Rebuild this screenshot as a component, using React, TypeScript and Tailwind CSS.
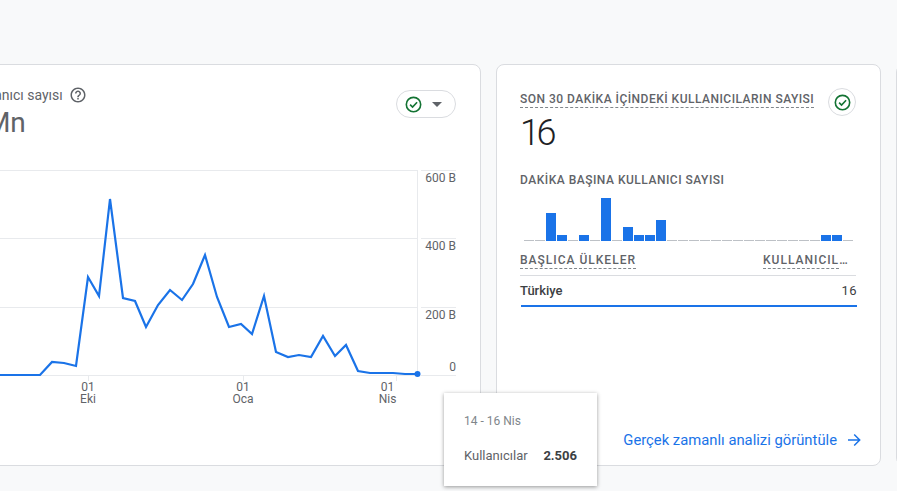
import React from "react";

const pts: [number, number][] = [[0,375],[40,375],[52,362],[64,363],[76,366],[88,277],[99,296],[110,199],[123,298],[135,301],[146,327],[158,305],[170,290],[182,300],[193,284],[205,255],[217,297],[229,327],[241,324],[252,334],[264,296],[276,352],[288,357],[299,355],[311,357],[323,336],[335,356],[346,345],[358,371],[370,373],[393,373],[405,374],[417,374]];
const bars: Record<number, number> = {2:28,3:6,5:6,7:43,9:14,10:6,11:6,12:21,27:6,28:6};

function CheckCircle({ size = 18 }: { size?: number }) {
  return (
    <svg width={size} height={size} viewBox="0 0 18 18" fill="none">
      <circle cx="9" cy="9" r="7.6" stroke="#137333" strokeWidth="1.7" />
      <path d="M5.4 9.2 L8 11.8 L12.8 6.6" stroke="#137333" strokeWidth="1.7" />
    </svg>
  );
}

function Chart() {
  const gridY = [170, 238, 307, 375];
  const labels = ["600 B", "400 B", "200 B", "0"];
  return (
    <svg width="520" height="280" viewBox="-60 165 520 280" className="block -ml-[1px]" style={{ fontFamily: "Roboto, sans-serif" }}>
      {gridY.map((y) => (
        <g key={y}>
          <line x1="-60" x2="417" y1={y + 0.5} y2={y + 0.5} stroke="#e8eaed" />
          <line x1="421" x2="456" y1={y + 0.5} y2={y + 0.5} stroke="#e8eaed" />
        </g>
      ))}
      <line x1="417.5" x2="417.5" y1="170" y2="376" stroke="#e8eaed" />
      {[88, 243, 396].map((x) => (
        <line key={x} x1={x + 0.5} x2={x + 0.5} y1="376" y2="381" stroke="#e8eaed" />
      ))}
      {labels.map((t, i) => (
        <text key={t} x="456" y={t === "0" ? 371 : gridY[i] + 12} textAnchor="end" fontSize="12" fill="#5f6368">{t}</text>
      ))}
      {[["01","Eki",88],["01","Oca",243],["01","Nis",387.5]].map(([a,b,x]) => (
        <g key={String(b)} textAnchor="middle" fontSize="12" fill="#5f6368">
          <text x={Number(x)} y="391">{a}</text>
          <text x={Number(x)} y="403">{b}</text>
        </g>
      ))}
      <polyline points={pts.map((p) => p.join(",")).join(" ")} fill="none" stroke="#1a73e8" strokeWidth="2.2" strokeLinejoin="miter" />
      <circle cx="417.5" cy="374" r="3" fill="#1a73e8" />
    </svg>
  );
}

function RightCard() {
  return (
    <div className="w-[385px] h-[402px] shrink-0 bg-white border border-[#dadce0] rounded-lg flex flex-col pl-[23px] pr-[24px] pt-[26px] pb-[15px]">
      <div className="flex justify-between items-start">
        <div className="text-[12px] leading-[16px] font-medium tracking-[0.48px] text-[#5f6368] border-b border-dashed border-[#80868b] whitespace-nowrap">SON 30 DAKİKA İÇİNDEKİ KULLANICILARIN SAYISI</div>
        <div className="w-[28px] h-[28px] -mt-[3px] rounded-full border border-[#dadce0] flex items-center justify-center"><CheckCircle size={17} /></div>
      </div>
      <div className="text-[36px] leading-[40px] text-[#202124] -mt-[3px] font-light tracking-[-3.5px]">16</div>
      <div className="mt-[19px] text-[12px] leading-[16px] font-medium tracking-[0.5px] text-[#5f6368]">DAKİKA BAŞINA KULLANICI SAYISI</div>
      <div className="mt-[9px] h-[44px] ml-[4px] flex items-end gap-[1px]">
        {Array.from({ length: 30 }).map((_, i) => (
          <div key={i} className={bars[i] ? "w-[10px] bg-[#1a73e8]" : "w-[10px] h-[1px] bg-[#bdc1c6]"} style={bars[i] ? { height: bars[i] } : undefined} />
        ))}
      </div>
      <div className="mt-[11px] flex justify-between items-start text-[12px] leading-[16px] font-medium tracking-[1px] text-[#5f6368] pb-[6px] border-b border-[#dadce0] w-[336px]">
        <span className="border-b border-dashed border-[#80868b]">BAŞLICA ÜLKELER</span>
        <div className="mr-[8px] w-[85px]">
          <div className="whitespace-nowrap overflow-hidden text-ellipsis">KULLANICILAR</div>
          <div className="w-[76px] border-b border-dashed border-[#80868b]" />
        </div>
      </div>
      <div className="flex justify-between text-[13px] leading-[16px] mt-[7px] w-[337px]">
        <span className="font-medium text-[#3c4043]">Türkiye</span>
        <span className="text-[#3c4043] tracking-[0.5px]">16</span>
      </div>
      <div className="mt-[6px] ml-[1px] h-[2px] w-[336px] bg-[#1a73e8]" />
      <div className="mt-auto flex justify-end items-center gap-[10px] -mr-[5px] text-[14.8px] leading-[20px] text-[#1a73e8]">
        <span>Gerçek zamanlı analizi görüntüle</span>
        <svg width="14" height="14" viewBox="0 0 14 14" fill="none" stroke="#1a73e8" strokeWidth="1.5">
          <path d="M1 7 H12.5 M7.2 1.5 L12.7 7 L7.2 12.5" />
        </svg>
      </div>
    </div>
  );
}

export default function App() {
  return (
    <div className="relative w-[897px] h-[491px] overflow-hidden bg-[#f8f9fa]" style={{ fontFamily: "Roboto, sans-serif" }}>
      <div className="flex gap-[15px] pt-[64px] -ml-[60px]">
        <div className="w-[541px] h-[402px] shrink-0 bg-white border border-[#dadce0] rounded-lg flex flex-col">
          <div className="flex justify-between items-start h-[100px] pr-[24px] pt-[21px] pl-[19px]">
            <div>
              <div className="ml-[11px] flex items-center gap-[6px] text-[14px] leading-[14px] text-[#5f6368]">
                <span>Kullanıcı sayısı</span>
                <svg width="18" height="18" viewBox="0 0 24 24" fill="#5f6368"><path d="M11 18h2v-2h-2v2zm1-16C6.48 2 2 6.48 2 12s4.48 10 10 10 10-4.48 10-10S17.52 2 12 2zm0 18c-4.41 0-8-3.59-8-8s3.59-8 8-8 8 3.59 8 8-3.59 8-8 8zm0-14c-2.21 0-4 1.79-4 4h2c0-1.1.9-2 2-2s2 .9 2 2c0 2-3 1.75-3 5h2c0-2.25 3-2.5 3-5 0-2.21-1.79-4-4-4z"/></svg>
              </div>
              <div className="-ml-[18px] text-[28px] leading-[36px] text-[#5f6368] mt-[1px]">2,5 Mn</div>
            </div>
            <div className="mt-[4px] w-[60px] h-[28px] rounded-full border border-[#dadce0] flex items-center pl-[8px] gap-[10px]">
              <CheckCircle size={17} />
              <div className="w-0 h-0 border-l-[5px] border-r-[5px] border-t-[5px] border-l-transparent border-r-transparent border-t-[#5f6368]" />
            </div>
          </div>
          <Chart />
        </div>
        <RightCard />
        <div className="w-[100px] h-[402px] shrink-0 bg-white border border-[#dadce0] rounded-lg" />
      </div>
      <div className="absolute left-[444px] top-[393px] w-[153px] h-[93px] bg-white shadow-[0_1px_4px_rgba(0,0,0,0.4)] px-[20px] pt-[20px] leading-[16px]">
        <div className="text-[12px] text-[#80868b]">14 - 16 Nis</div>
        <div className="mt-[19px] text-[13px] flex justify-between text-[#5f6368]">
          <span>Kullanıcılar</span>
          <span className="font-bold text-[#3c4043]">2.506</span>
        </div>
      </div>
    </div>
  );
}
